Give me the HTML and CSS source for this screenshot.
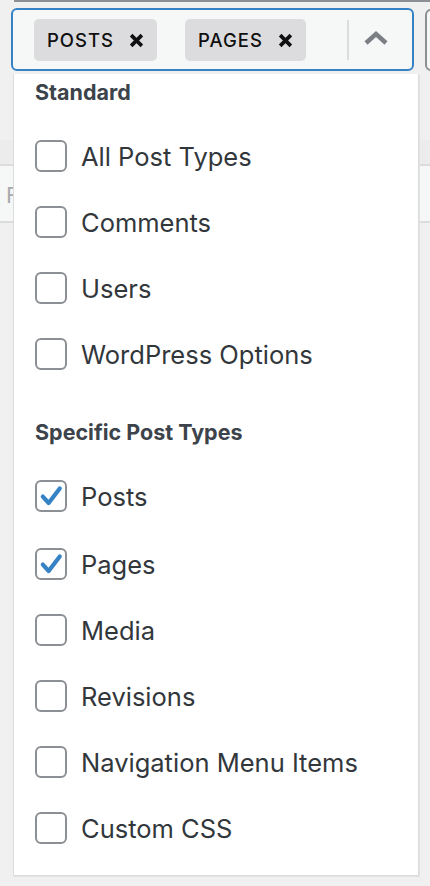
FILE: index.html
```html
<!DOCTYPE html>
<html>
<head>
<meta charset="utf-8">
<link rel="stylesheet" href="styles.css">
</head>
<body>
<div class="page">
  <div class="topline"></div>
  <div class="side-btn"></div>
  <div class="field">
    <div class="select">
      <div class="chips">
        <span class="chip">POSTS <svg class="x" viewBox="0 0 14 14"><path d="M2 2 L12 12 M12 2 L2 12" stroke="#101010" stroke-width="3.4" stroke-linecap="butt"/></svg></span>
        <span class="chip">PAGES <svg class="x" viewBox="0 0 14 14"><path d="M2 2 L12 12 M12 2 L2 12" stroke="#101010" stroke-width="3.4" stroke-linecap="butt"/></svg></span>
      </div>
      <div class="divider"></div>
      <svg class="chev" viewBox="0 0 24 14"><path d="M2 12 L12 3 L22 12" fill="none" stroke="#7b7f84" stroke-width="4.4"/></svg>
    </div>
    <div class="menu">
      <div class="group">Standard</div>
      <label class="opt"><span class="box"></span>All Post Types</label>
      <label class="opt"><span class="box"></span>Comments</label>
      <label class="opt"><span class="box"></span>Users</label>
      <label class="opt"><span class="box"></span>WordPress Options</label>
      <div class="group second">Specific Post Types</div>
      <label class="opt"><span class="box on"><svg viewBox="0 0 24 24"><path d="M5 12.5 L10 18 L19.5 5.5" fill="none" stroke="#3582c4" stroke-width="3.6" stroke-linecap="round" stroke-linejoin="round"/></svg></span>Posts</label>
      <label class="opt pages"><span class="box on"><svg viewBox="0 0 24 24"><path d="M5 12.5 L10 18 L19.5 5.5" fill="none" stroke="#3582c4" stroke-width="3.6" stroke-linecap="round" stroke-linejoin="round"/></svg></span>Pages</label>
      <label class="opt"><span class="box"></span>Media</label>
      <label class="opt"><span class="box"></span>Revisions</label>
      <label class="opt"><span class="box"></span>Navigation Menu Items</label>
      <label class="opt"><span class="box"></span>Custom CSS</label>
    </div>
  </div>
  <div class="table">
    <div class="trow head"></div>
    <div class="trow"><span class="cell">F</span></div>
  </div>
</div>
</body>
</html>
```
FILE: styles.css
```css
* { box-sizing: border-box; }
html, body { margin: 0; padding: 0; }
body {
  background: #f0f0f1;
  font-family: Inter, "Noto Sans", sans-serif;
  width: 430px;
  height: 886px;
  overflow: hidden;
}
.page { position: relative; height: 886px; }
.topline {
  height: 2px;
  margin: 0 0 0 14px;
  background: #8c8f94;
}
.side-btn {
  position: absolute;
  left: 425px;
  top: 9px;
  width: 20px;
  height: 62px;
  border: 2px solid #8c8f94;
  border-radius: 6px;
  background: #f6f7f7;
}
.field { position: relative; padding: 6px 0 0 11px; }
.select {
  width: 403px;
  height: 63px;
  border: 2px solid #3582c4;
  border-radius: 6px;
  background: #f6f7f7;
  display: flex;
  align-items: center;
  padding: 1px 0 0 21px;
}
.chips { display: flex; gap: 28px; flex: 1; }
.chip {
  display: flex;
  align-items: center;
  height: 42px;
  padding: 0 13px 0 13px;
  background: #dcdcde;
  border-radius: 5px;
  font-size: 18.5px;
  font-weight: 500;
  letter-spacing: 1px;
  color: #101010;
}
.x { width: 15px; height: 15px; margin-left: 15px; }
.divider { width: 2px; height: 40px; background: #dcdcde; }
.chev { width: 24px; height: 14px; margin: 0 24px 4px 15px; }
.menu {
  position: absolute;
  left: 13px;
  top: 72px;
  width: 406px;
  height: 802px;
  background: #fff;
  border: 1px solid #dcdcde;
  border-top: none;
  box-shadow: 1px 1px 0 #e2e2e4;
  z-index: 2;
  padding: 3px 0 0 21px;
}
.group {
  font-size: 21.5px;
  font-weight: 700;
  color: #3c434a;
  height: 30px;
  line-height: 30px;
  margin-bottom: 16px;
}
.group.second { margin-top: 30px; }
.opt {
  display: flex;
  align-items: center;
  height: 66px;
  font-size: 25.5px;
  color: #32373c;
}
.opt.pages { margin-top: 2px; }
.box {
  width: 32px;
  height: 32px;
  border: 2px solid #8c8f94;
  border-radius: 6px;
  margin-right: 14px;
  background: #fff;
  display: flex;
  align-items: center;
  justify-content: center;
}
.box svg { width: 28px; height: 28px; }
.table { position: absolute; left: 0; top: 140px; width: 430px; }
.trow {
  height: 26px;
  border-bottom: 2px solid #dcdcde;
  background: #ececec;
}
.trow:not(.head) { height: 57px; background: #f6f7f7; position: relative; }
.cell {
  position: absolute;
  left: 6px;
  top: 16px;
  font-size: 22px;
  color: #a7aaad;
}
```
